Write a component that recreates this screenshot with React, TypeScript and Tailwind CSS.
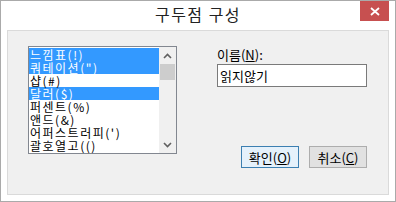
import React from 'react';

const items = [
  { label: '느낌표(!)', selected: true },
  { label: '쿼테이션(")', selected: true },
  { label: '샵(#)', selected: false },
  { label: '달러($)', selected: true },
  { label: '퍼센트(%)', selected: false },
  { label: '앤드(&)', selected: false },
  { label: "어퍼스트러피(')", selected: false },
  { label: '괄호열고(()', selected: false },
];

const font = { fontFamily: '"Noto Sans CJK KR", "Liberation Sans", sans-serif' };

function ListBox() {
  return (
    <div className="flex h-[108px] w-[149px] border border-[#828790] bg-white">
      <div className="flex-1 pt-px">
        {items.map((it) => (
          <div
            key={it.label}
            className={`flex h-[13px] items-center pl-px text-[12px] leading-[13px] tracking-[1.5px] whitespace-nowrap ${
              it.selected ? 'bg-[#3399ff] text-white' : 'text-black'
            }`}
          >
            {it.label}
          </div>
        ))}
      </div>
      <div className="flex w-[17px] flex-col bg-[#f0f0f0]">
        <div className="flex h-[17px] items-center justify-center">
          <svg width="9" height="6" viewBox="0 0 9 6">
            <path d="M1 5 L4.5 1.5 L8 5" fill="none" stroke="#606060" strokeWidth="1.6" />
          </svg>
        </div>
        <div className="mx-px h-[16px] bg-[#cdcdcd]" />
        <div className="flex-1" />
        <div className="flex h-[17px] items-center justify-center">
          <svg width="9" height="6" viewBox="0 0 9 6">
            <path d="M1 1 L4.5 4.5 L8 1" fill="none" stroke="#606060" strokeWidth="1.6" />
          </svg>
        </div>
      </div>
    </div>
  );
}

function Button({ children, primary }: { children: React.ReactNode; primary?: boolean }) {
  return (
    <button
      className={`flex h-[22px] w-[58px] items-center justify-center border text-[13px] leading-none text-black ${
        primary ? 'border-[#3c7fb1] bg-[#e5f1fb]' : 'border-[#adadad] bg-[#e1e1e1]'
      }`}
    >
      {children}
    </button>
  );
}

export default function App() {
  return (
    <div className="flex h-[202px] w-[396px] flex-col border border-[#aaaaaa] bg-white" style={font}>
      <div className="grid h-[29px] grid-cols-[1fr_auto_1fr]">
        <div />
        <div className="pt-[3px] text-[16px] leading-[21px] tracking-[1.5px] text-[#222]">구두점 구성</div>
        <div className="flex justify-end pr-[6px]">
          <div className="flex h-[20px] w-[29px] items-center justify-center bg-[#c75050]">
            <svg width="10" height="9" viewBox="0 0 10 9">
              <path d="M1 1 L9 8 M9 1 L1 8" stroke="white" strokeWidth="1.8" />
            </svg>
          </div>
        </div>
      </div>
      <div className="mx-[6px] flex h-[165px] border border-[#dadada] bg-[#f0f0f0] pl-[20px] pt-[15px]">
        <ListBox />
        <div className="ml-[40px] flex flex-col">
          <div className="mt-[1px] text-[13px] leading-[15px] text-black">
            이름(<span className="underline">N</span>):
          </div>
          <div className="mt-[2px] h-[23px] w-[150px] border border-[#7a7a7a] bg-white pl-[2px] text-[13px] leading-[21px] text-black">
            읽지않기
          </div>
          <div className="mt-[59px] flex gap-[10px] pl-[24px]">
            <Button primary>
              확인(<span className="underline">O</span>)
            </Button>
            <Button>
              취소(<span className="underline">C</span>)
            </Button>
          </div>
        </div>
      </div>
    </div>
  );
}
